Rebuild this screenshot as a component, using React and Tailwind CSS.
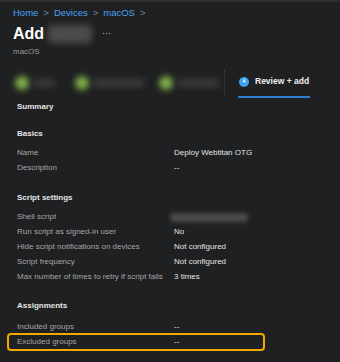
import React from "react";

const Row = ({ label, value, blurred }) => (
    <div className="flex h-[15px] items-center">
        <div className="w-[157px] shrink-0 text-[#a6a6a6]">{label}</div>
        {blurred ? (
            <div className="ml-[-4px] h-[9px] w-[78px] rounded-sm bg-[#4a4b4d] blur-[2px]" />
        ) : (
            <div className="text-[#e4e4e4]">{value}</div>
        )}
    </div>
);

const Heading = ({ children, className = "" }) => (
    <div className={`font-bold text-[#e6e6e6] ${className}`}>{children}</div>
);

const Step = ({ barWidth }) => (
    <div className="flex items-center">
        <div className="h-[14px] w-[14px] rounded-full bg-[#7fb04a] blur-[3px]" />
        <div
            className="ml-[4px] h-[8px] rounded bg-[#3a3b3d] blur-[3px]"
            style={{ width: barWidth }}
        />
    </div>
);

export default function App() {
    return (
        <div
            className="h-[362px] w-[340px] overflow-hidden border-t-2 border-[#2c2d2f] bg-[#1f2022] text-[8px] leading-none"
            style={{ fontFamily: '"Liberation Sans", Arial, sans-serif' }}
        >
            {/* Header */}
            <div className="px-[13px] pt-[6px]">
                <div className="flex items-center gap-[5px] text-[9.5px] text-[#4aa3f2]">
                    <span>Home</span>
                    <span className="text-[#7a8a9a]">&gt;</span>
                    <span>Devices</span>
                    <span className="text-[#7a8a9a]">&gt;</span>
                    <span>macOS</span>
                    <span className="text-[#7a8a9a]">&gt;</span>
                </div>
                <div className="mt-[7px] flex items-center">
                    <span className="text-[16px] font-bold text-white">Add</span>
                    <div className="ml-[4px] h-[18px] w-[44px] rounded-sm bg-[#4a4b4d] blur-[3px]" />
                    <span className="ml-[10px] text-[9px] text-[#cfcfcf]">···</span>
                </div>
                <div className="mt-[5px] text-[8px] text-[#9a9a9a]">macOS</div>
            </div>

            {/* Steps */}
            <div className="mt-[12px] flex h-[30px] items-center pl-[15px]">
                <Step barWidth="22px" />
                <div className="ml-[20px]">
                    <Step barWidth="52px" />
                </div>
                <div className="ml-[14px]">
                    <Step barWidth="42px" />
                </div>
                <div className="ml-[5px] h-[26px] border-l border-dotted border-[#3c3d40]" />
                <div className="ml-[13px] flex h-full flex-col justify-center">
                    <div className="flex h-full items-center border-b-2 border-[#2f7fd1] pl-[1px] pr-[1px]">
                        <div className="flex h-[10px] w-[10px] items-center justify-center rounded-full bg-[#3fa2f0] text-[5px] font-bold text-white">
                            4
                        </div>
                        <span className="ml-[6px] text-[8.5px] font-bold text-[#f0f0f0]">Review + add</span>
                    </div>
                </div>
            </div>

            {/* Summary */}
            <div className="px-[17px]">
                <Heading className="mt-[5px]">Summary</Heading>

                <Heading className="mt-[19px]">Basics</Heading>
                <div className="mt-[8px]">
                    <Row label="Name" value="Deploy Webtitan OTG" />
                    <Row label="Description" value="--" />
                </div>

                <Heading className="mt-[18px]">Script settings</Heading>
                <div className="mt-[8px]">
                    <Row label="Shell script" blurred />
                    <Row label="Run script as signed-in user" value="No" />
                    <Row label="Hide script notifications on devices" value="Not configured" />
                    <Row label="Script frequency" value="Not configured" />
                    <Row label="Max number of times to retry if script fails" value="3 times" />
                </div>

                <Heading className="mt-[17px]">Assignments</Heading>
                <div className="mt-[10px]">
                    <Row label="Included groups" value="--" />
                </div>
            </div>
            <div className="ml-[7px] mt-[-2px] flex h-[18px] w-[258px] items-center rounded-[4px] border-2 border-[#f5a700] pl-[8px]">
                <div className="w-[157px] shrink-0 text-[#a6a6a6]">Excluded groups</div>
                <div className="text-[#e4e4e4]">--</div>
            </div>
        </div>
    );
}
